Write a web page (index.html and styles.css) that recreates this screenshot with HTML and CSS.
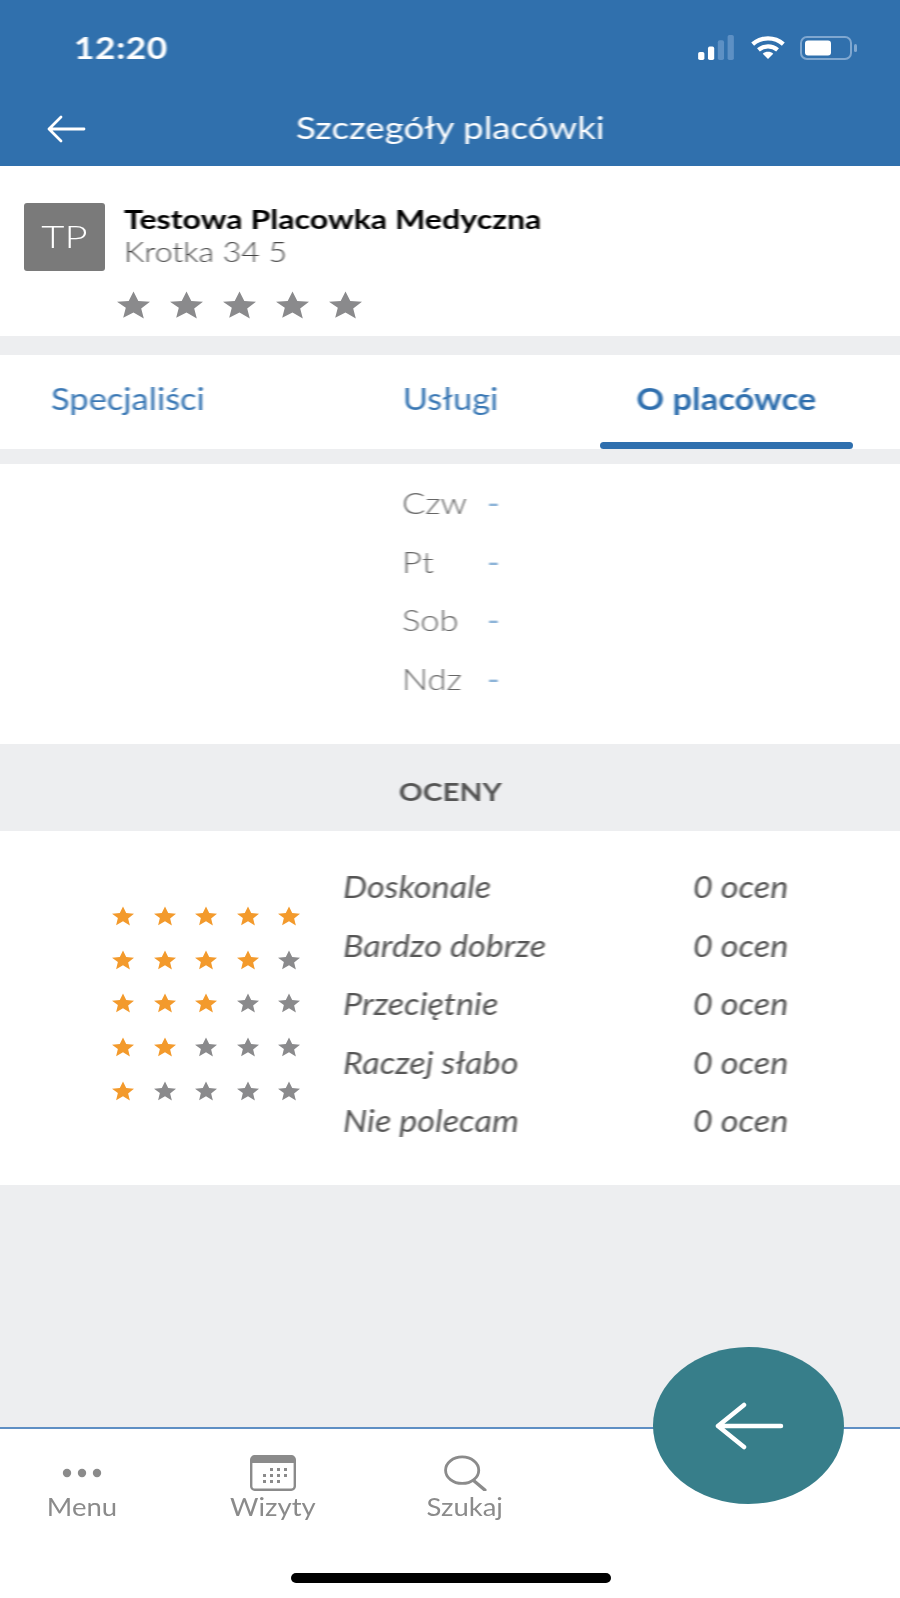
FILE: index.html
```html
<!DOCTYPE html>
<html lang="pl">
<head>
  <meta charset="UTF-8">
  <meta name="viewport" content="width=device-width, initial-scale=1.0">
  <title>Szczegóły placówki</title>
  <link rel="stylesheet" href="styles.css">
</head>
<body>
  <svg class="defs" width="0" height="0">
    <symbol id="star" viewBox="0 0 24 24" preserveAspectRatio="none">
      <path d="M12 0.5l3.5 8 8.5 0.8-6.4 5.6 1.9 8.6L12 18.4l-7.5 4.6 1.9-8.6L0 9.3l8.5-0.8z"/>
    </symbol>
  </svg>

  <div class="app">
    <header class="topbar">
      <div class="status">
        <span class="time">12:20</span>
        <div class="status-icons">
          <svg class="signal" viewBox="0 0 40 28">
            <rect x="0" y="19" width="7" height="9" rx="2" fill="#fff"/>
            <rect x="11" y="13" width="7" height="15" rx="2" fill="#fff"/>
            <rect x="22" y="6" width="7" height="22" rx="2" fill="#5d90c4"/>
            <rect x="33" y="0" width="7" height="28" rx="2" fill="#5d90c4"/>
          </svg>
          <svg class="wifi" viewBox="0 0 36 24">
            <path d="M2 8.5C11 0.5 25 0.5 34 8.5M8 14.5c6-5 14-5 20 0" fill="none" stroke="#fff" stroke-width="4.5"/>
            <path d="M18 24l-5.5-5.5c3-2.6 8-2.6 11 0z" fill="#fff"/>
          </svg>
          <svg class="battery" viewBox="0 0 58 24">
            <rect x="1" y="1" width="50" height="22" rx="6" fill="none" stroke="#7fa7d0" stroke-width="2"/>
            <rect x="5" y="4.5" width="26" height="15" rx="3" fill="#fff"/>
            <rect x="54" y="8" width="3" height="8" rx="1.5" fill="#7fa7d0"/>
          </svg>
        </div>
      </div>
      <div class="titlebar">
        <svg class="back" viewBox="0 0 40 28">
          <path d="M38 14H3M15 2L3 14l12 12" fill="none" stroke="#fff" stroke-width="2.8" stroke-linecap="round" stroke-linejoin="round"/>
        </svg>
        <h1>Szczegóły placówki</h1>
      </div>
    </header>

    <section class="place">
      <div class="place-head">
        <div class="avatar"><span>TP</span></div>
        <div class="place-text">
          <div class="place-name">Testowa Placowka Medyczna</div>
          <div class="place-addr">Krotka 34 5</div>
        </div>
      </div>
      <div class="place-stars">
        <svg><use href="#star"/></svg>
        <svg><use href="#star"/></svg>
        <svg><use href="#star"/></svg>
        <svg><use href="#star"/></svg>
        <svg><use href="#star"/></svg>
      </div>
    </section>

    <nav class="tabs">
      <a class="tab tab-left"><span>Specjaliści</span></a>
      <a class="tab tab-mid"><span>Usługi</span></a>
      <a class="tab tab-right active"><span>O placówce</span></a>
    </nav>

    <section class="hours">
      <div class="hours-row"><span>Czw</span><span class="dash">-</span></div>
      <div class="hours-row"><span>Pt</span><span class="dash">-</span></div>
      <div class="hours-row"><span>Sob</span><span class="dash">-</span></div>
      <div class="hours-row"><span>Ndz</span><span class="dash">-</span></div>
    </section>

    <div class="band"><span>OCENY</span></div>

    <section class="ratings">
      <div class="rating-stars">
        <div class="star-row"><svg class="on"><use href="#star"/></svg><svg class="on"><use href="#star"/></svg><svg class="on"><use href="#star"/></svg><svg class="on"><use href="#star"/></svg><svg class="on"><use href="#star"/></svg></div>
        <div class="star-row"><svg class="on"><use href="#star"/></svg><svg class="on"><use href="#star"/></svg><svg class="on"><use href="#star"/></svg><svg class="on"><use href="#star"/></svg><svg><use href="#star"/></svg></div>
        <div class="star-row"><svg class="on"><use href="#star"/></svg><svg class="on"><use href="#star"/></svg><svg class="on"><use href="#star"/></svg><svg><use href="#star"/></svg><svg><use href="#star"/></svg></div>
        <div class="star-row"><svg class="on"><use href="#star"/></svg><svg class="on"><use href="#star"/></svg><svg><use href="#star"/></svg><svg><use href="#star"/></svg><svg><use href="#star"/></svg></div>
        <div class="star-row"><svg class="on"><use href="#star"/></svg><svg><use href="#star"/></svg><svg><use href="#star"/></svg><svg><use href="#star"/></svg><svg><use href="#star"/></svg></div>
      </div>
      <div class="rating-list">
        <div class="rating-row"><span>Doskonale</span><span>0 ocen</span></div>
        <div class="rating-row"><span>Bardzo dobrze</span><span>0 ocen</span></div>
        <div class="rating-row"><span>Przeciętnie</span><span>0 ocen</span></div>
        <div class="rating-row"><span>Raczej słabo</span><span>0 ocen</span></div>
        <div class="rating-row"><span>Nie polecam</span><span>0 ocen</span></div>
      </div>
    </section>

    <div class="spacer"></div>

    <footer class="tabbar">
      <div class="tabbar-items">
        <a class="tabbar-item item-menu">
          <svg class="ico" viewBox="0 0 46 36">
            <circle cx="8" cy="18" r="4.2"/><circle cx="23" cy="18" r="4.2"/><circle cx="38" cy="18" r="4.2"/>
          </svg>
          <span>Menu</span>
        </a>
        <a class="tabbar-item item-visits">
          <svg class="ico" viewBox="0 0 46 36">
            <rect x="1.2" y="1.2" width="43.6" height="33.6" rx="3.5" fill="#fff" stroke="#8b8b8b" stroke-width="2.4"/>
            <path d="M1 4.5C1 2 2.5 1 4.5 1h37C43.5 1 45 2 45 4.5V8H1z"/>
            <g class="cal-dots">
              <rect x="20" y="13" width="3" height="3"/><rect x="27" y="13" width="3" height="3"/><rect x="34" y="13" width="3" height="3"/>
              <rect x="13" y="19" width="3" height="3"/><rect x="20" y="19" width="3" height="3"/><rect x="27" y="19" width="3" height="3"/><rect x="34" y="19" width="3" height="3"/>
              <rect x="13" y="25" width="3" height="3"/><rect x="20" y="25" width="3" height="3"/><rect x="27" y="25" width="3" height="3"/>
            </g>
          </svg>
          <span>Wizyty</span>
        </a>
        <a class="tabbar-item item-search">
          <svg class="ico" viewBox="0 0 46 38">
            <ellipse cx="20" cy="16" rx="17.5" ry="14" fill="none" stroke="#8b8b8b" stroke-width="3"/>
            <path d="M32 27l12 10" fill="none" stroke="#8b8b8b" stroke-width="3.5" stroke-linecap="round"/>
          </svg>
          <span>Szukaj</span>
        </a>
      </div>
      <div class="home-bar"></div>
    </footer>

    <button class="fab">
      <svg viewBox="0 0 70 48">
        <path d="M67 24H4M30 3L4 24l26 21" fill="none" stroke="#fff" stroke-width="4.5" stroke-linecap="round" stroke-linejoin="round"/>
      </svg>
    </button>
  </div>
</body>
</html>
```

FILE: styles.css
```css
* {
  box-sizing: border-box;
}
body {
  margin: 0;
  font-family: Lato, "Open Sans", sans-serif;
  background-color: #edeef0;
}
a {
  text-decoration: none;
  color: inherit;
}
.defs {
  position: absolute;
}
.app {
  position: relative;
  width: 900px;
  height: 1598px;
  display: flex;
  flex-direction: column;
  overflow: hidden;
}

.time,
.titlebar h1,
.avatar span,
.tab span,
.hours-row span,
.band span,
.rating-row span,
.tabbar-item span {
  display: inline-block;
}
.time,
.place-name,
.place-addr,
.hours-row span,
.rating-row span {
  transform-origin: left center;
}

/* soft look of the screen, on the content only so the page edges stay clean */
.time,
.titlebar h1,
.status-icons,
.back,
.avatar,
.place-name,
.place-addr,
.place-stars,
.tab span,
.active::after,
.hours-row span,
.band span,
.star-row,
.rating-row span,
.tabbar-item,
.home-bar,
.fab {
  filter: blur(0.7px);
}

/* top */
.topbar {
  height: 166px;
  background-color: #3070ad;
  color: #fff;
}
.status {
  height: 96px;
  padding: 27px 42px 0 74px;
  display: flex;
  justify-content: space-between;
  align-items: flex-start;
}
.time {
  font-size: 31px;
  font-weight: 700;
  line-height: 40px;
  letter-spacing: 0.5px;
  transform: scaleX(1.14);
}
.status-icons {
  display: flex;
  align-items: center;
  gap: 14px;
  padding-top: 8px;
}
.signal {
  width: 40px;
  height: 25px;
}
.wifi {
  width: 36px;
  height: 23px;
}
.battery {
  width: 58px;
  height: 24px;
}
.titlebar {
  position: relative;
  height: 70px;
  display: flex;
  align-items: flex-start;
  justify-content: center;
}
.titlebar h1 {
  margin: 0;
  font-size: 31px;
  font-weight: 400;
  line-height: 62px;
  transform: scaleX(1.185);
}
.back {
  position: absolute;
  left: 46px;
  top: 19px;
  width: 40px;
  height: 28px;
}

/* place */
.place {
  height: 170px;
  background-color: #fff;
  padding: 37px 0 0 24px;
}
.place-head {
  display: flex;
  gap: 19px;
}
.avatar {
  width: 81px;
  height: 68px;
  border-radius: 3px;
  background-color: #7a7a7a;
  color: #fff;
  font-size: 32px;
  font-weight: 300;
  line-height: 66px;
  text-align: center;
}
.avatar span {
  transform: scaleX(1.25);
}
.place-name {
  font-size: 27px;
  font-weight: 700;
  color: #000;
  line-height: 31px;
  transform: scaleX(1.19);
}
.place-addr {
  font-size: 27px;
  font-weight: 300;
  color: #444;
  line-height: 36px;
  transform: scaleX(1.185);
}
.place-stars {
  display: flex;
  gap: 20px;
  margin: 20px 0 0 93px;
}
.place-stars svg {
  width: 33px;
  height: 28px;
  fill: #8a8a8c;
}

/* tabs */
.tabs {
  height: 94px;
  margin-top: 19px;
  background-color: #fff;
  display: flex;
  font-size: 30px;
  color: #3a78b5;
}
.tab {
  display: block;
  line-height: 87px;
  text-align: center;
}
.tab span {
  transform: scaleX(1.15);
}
.tab-left {
  width: 256px;
}
.tab-mid {
  width: 344px;
  padding-left: 45px;
}
.tab-right {
  width: 253px;
}
.active {
  font-weight: 700;
  color: #2f6fae;
}
.active::after {
  content: "";
  display: block;
  height: 7px;
  border-radius: 4px;
  background-color: #2f6fae;
}

/* hours */
.hours {
  height: 280px;
  margin-top: 15px;
  background-color: #fff;
  padding: 9px 0 0 402px;
  font-size: 30px;
  font-weight: 300;
  color: #666;
}
.hours-row {
  display: flex;
  height: 58.6px;
  line-height: 58px;
}
.hours-row span {
  transform: scaleX(1.15);
}
.hours-row span:first-child {
  width: 85px;
}
.hours-row .dash {
  color: #8db4d8;
  font-weight: 400;
}

/* ratings */
.band {
  height: 87px;
  background-color: #edeef0;
  color: #555;
  font-size: 25px;
  font-weight: 700;
  line-height: 94px;
  text-align: center;
}
.band span {
  transform: scaleX(1.19);
}
.ratings {
  height: 354px;
  background-color: #fff;
  display: flex;
}
.rating-stars {
  width: 343px;
  padding: 75px 0 0 112px;
}
.star-row {
  display: flex;
  gap: 19.5px;
  height: 43.7px;
}
.star-row svg {
  width: 22px;
  height: 20px;
  fill: #8a8a8c;
}
.star-row svg.on {
  fill: #f39a2c;
}
.rating-list {
  padding-top: 26px;
  font-size: 30px;
  font-style: italic;
  color: #555;
}
.rating-row {
  display: flex;
  height: 58.6px;
  line-height: 58px;
}
.rating-row span {
  transform: scaleX(1.14);
}
.rating-row span:first-child {
  width: 350px;
}
.spacer {
  flex: 1;
}

/* bottom */
.tabbar {
  height: 171px;
  background-color: #fff;
  border-top: 2px solid #5f8fc4;
}
.tabbar-items {
  display: flex;
  padding-top: 26px;
}
.tabbar-item {
  display: flex;
  flex-direction: column;
  align-items: center;
  font-size: 25px;
  color: #8b8b8b;
}
.tabbar-item span {
  line-height: 30px;
  transform: scaleX(1.1);
}
.ico {
  width: 46px;
  height: 36px;
  fill: #8b8b8b;
}
.cal-dots {
  fill: #8b8b8b;
}
.item-menu {
  width: 164px;
}
.item-visits {
  width: 217px;
}
.item-search {
  width: 168px;
}
.home-bar {
  width: 320px;
  height: 10px;
  margin: 52px 0 0 291px;
  border-radius: 5px;
  background-color: #000;
}
.fab {
  position: absolute;
  left: 653px;
  top: 1347px;
  width: 191px;
  height: 157px;
  padding: 0;
  border: none;
  border-radius: 50%;
  background-color: #377e8a;
  display: flex;
  align-items: center;
  justify-content: center;
}
.fab svg {
  width: 70px;
  height: 48px;
}
```
